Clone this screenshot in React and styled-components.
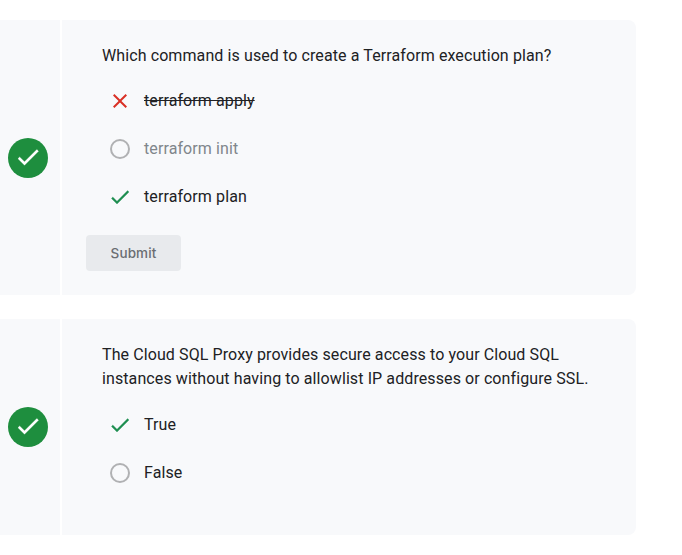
import React from 'react';
import styled, { createGlobalStyle } from 'styled-components';

const GlobalStyle = createGlobalStyle`
  * { box-sizing: border-box; }
  body { margin: 0; background: #fff; font-family: Roboto, sans-serif; color: #202124; overflow: hidden; }
`;

const Page = styled.main`
  display: flex;
  flex-direction: column;
  gap: 24px;
  width: 636px;
  padding-top: 20px;
`;

const Card = styled.section`
  display: flex;
  height: ${(p) => p.$height}px;
  background: #f8f9fb;
  border-radius: 0 8px 8px 0;
`;

const StatusColumn = styled.div`
  display: flex;
  align-items: center;
  width: 62px;
  padding-left: 8px;
  border-right: 2px solid #fff;
`;

const Badge = styled.div`
  display: grid;
  place-items: center;
  width: 40px;
  height: 40px;
  padding-bottom: 2px;
  border-radius: 50%;
  background: #1e8e3e;
`;

const Content = styled.div`
  flex: 1;
  padding: 24px 24px 24px 40px;
`;

const Question = styled.p`
  margin: 0 0 ${(p) => p.$gap}px;
  font-size: 16px;
  line-height: 24px;
  white-space: pre-line;
  letter-spacing: 0.1px;
`;

const Option = styled.div`
  display: flex;
  align-items: center;
  gap: 12px;
  height: 48px;
  padding-left: 6px;
  font-size: 16px;
  line-height: 24px;
  letter-spacing: 0.1px;
  color: ${(p) => (p.$muted ? '#80868b' : '#202124')};
`;

const Marker = styled.span`
  display: grid;
  place-items: center;
  width: 24px;
  height: 24px;
`;

const Ring = styled.span`
  width: 20px;
  height: 20px;
  border: 2px solid #b0b1b3;
  border-radius: 50%;
`;

const Label = styled.span`
  text-decoration: ${(p) => (p.$struck ? 'line-through' : 'none')};
`;

const Submit = styled.button`
  display: block;
  width: 95px;
  height: 36px;
  margin: 14px 0 0 -16px;
  padding: 0;
  border: 0;
  border-radius: 4px;
  background: #e8eaed;
  color: #6a6d72;
  font: 500 13.5px/36px Inter, sans-serif;
  letter-spacing: 0.1px;
`;

const Check = ({ size, color }) => (
  <svg width={size} height={size} viewBox="0 0 24 24" fill={color}>
    <path d="M9 16.17 4.83 12l-1.42 1.41L9 19 21 7l-1.41-1.41z" stroke={color} strokeWidth="0.25" />
  </svg>
);

const Cross = () => (
  <svg width="24" height="24" viewBox="0 0 24 24" fill="#d93025">
    <path d="M19 6.41 17.59 5 12 10.59 6.41 5 5 6.41 10.59 12 5 17.59 6.41 19 12 13.41 17.59 19 19 17.59 13.41 12z" />
  </svg>
);

const markers = {
  wrong: <Cross />,
  right: <Check size={24} color="#1e8e50" />,
  open: <Ring />,
};

const questions = [
  {
    text: 'Which command is used to create a Terraform execution plan?',
    height: 275,
    gap: 9,
    submit: true,
    options: [
      { label: 'terraform apply', state: 'wrong', struck: true },
      { label: 'terraform init', state: 'open', muted: true },
      { label: 'terraform plan', state: 'right' },
    ],
  },
  {
    text: 'The Cloud SQL Proxy provides secure access to your Cloud SQL\ninstances without having to allowlist IP addresses or configure SSL.',
    height: 216,
    gap: 10,
    options: [
      { label: 'True', state: 'right' },
      { label: 'False', state: 'open' },
    ],
  },
];

export default function App() {
  return (
    <>
      <GlobalStyle />
      <Page>
        {questions.map((q) => (
          <Card key={q.text} $height={q.height}>
            <StatusColumn>
              <Badge><Check size={28} color="#fff" /></Badge>
            </StatusColumn>
            <Content>
              <Question $gap={q.gap}>{q.text}</Question>
              {q.options.map((o) => (
                <Option key={o.label} $muted={o.muted}>
                  <Marker>{markers[o.state]}</Marker>
                  <Label $struck={o.struck}>{o.label}</Label>
                </Option>
              ))}
              {q.submit && <Submit>Submit</Submit>}
            </Content>
          </Card>
        ))}
      </Page>
    </>
  );
}
